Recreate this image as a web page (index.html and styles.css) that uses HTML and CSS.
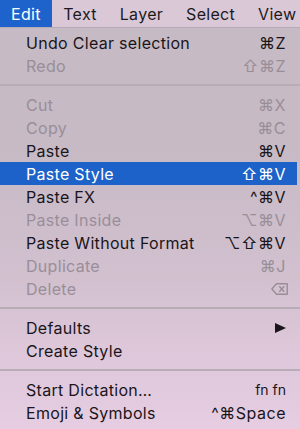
FILE: index.html
```html
<!DOCTYPE html>
<html>
<head>
<meta charset="utf-8">
<link rel="stylesheet" href="styles.css">
</head>
<body>
<div class="screen">
  <div class="menubar">
    <span class="mb-item active">Edit</span>
    <span class="mb-item">Text</span>
    <span class="mb-item">Layer</span>
    <span class="mb-item">Select</span>
    <span class="mb-item">View</span>
  </div>
  <div class="menu">
    <div class="row"><span class="label">Undo Clear selection</span><span class="key">⌘Z</span></div>
    <div class="row dis"><span class="label">Redo</span><span class="key">⇧⌘Z</span></div>
    <div class="sep"></div>
    <div class="row dis"><span class="label">Cut</span><span class="key">⌘X</span></div>
    <div class="row dis"><span class="label">Copy</span><span class="key">⌘C</span></div>
    <div class="row"><span class="label">Paste</span><span class="key">⌘V</span></div>
    <div class="row sel"><span class="label">Paste Style</span><span class="key">⇧⌘V</span></div>
    <div class="row"><span class="label">Paste FX</span><span class="key">^⌘V</span></div>
    <div class="row dis"><span class="label">Paste Inside</span><span class="key">⌥⌘V</span></div>
    <div class="row"><span class="label">Paste Without Format</span><span class="key">⌥⇧⌘V</span></div>
    <div class="row dis"><span class="label">Duplicate</span><span class="key">⌘J</span></div>
    <div class="row dis"><span class="label">Delete</span><span class="key">
      <svg class="del" width="17" height="12" viewBox="0 0 17 12"><path d="M5.5 0.75 H16.25 V11.25 H5.5 L0.9 6 Z" fill="none" stroke="currentColor" stroke-width="1.4" stroke-linejoin="round"/><path d="M8.3 3.3 L13.2 8.7 M13.2 3.3 L8.3 8.7" stroke="currentColor" stroke-width="1.5"/></svg>
    </span></div>
    <div class="sep"></div>
    <div class="row"><span class="label">Defaults</span><span class="key"><svg width="11" height="10" viewBox="0 0 11 10"><path d="M0 0 L11 5 L0 10 Z" fill="currentColor"/></svg></span></div>
    <div class="row"><span class="label">Create Style</span></div>
    <div class="sep"></div>
    <div class="row"><span class="label">Start Dictation…</span><span class="key small">fn fn</span></div>
    <div class="row"><span class="label">Emoji &amp; Symbols</span><span class="key">^⌘Space</span></div>
  </div>
</div>
</body>
</html>
```
FILE: styles.css
```css
html, body {
  margin: 0;
  padding: 0;
}
body {
  width: 300px;
  height: 429px;
  overflow: hidden;
  font-family: Inter, "Noto Sans", "DejaVu Sans", sans-serif;
}
.screen {
  width: 300px;
  height: 429px;
  background: linear-gradient(180deg, #c6bac4 0px, #c7bac5 150px, #d2c0cf 280px, #dfc8db 360px, #e6cde2 429px);
  display: flex;
  flex-direction: column;
}
.menubar {
  height: 27px;
  display: flex;
  align-items: stretch;
  background: #dac8d7;
  border-bottom: 1px solid #b6abb4;
  box-sizing: content-box;
  white-space: nowrap;
}
.mb-item {
  font-size: 16px;
  letter-spacing: 0.3px;
  color: #1d1a1d;
  display: flex;
  align-items: center;
  padding: 0 11.5px;
}
.mb-item.active {
  background: #1d63cb;
  color: #ffffff;
  padding: 0 11px;
}
.menu {
  padding-top: 3px;
  display: flex;
  flex-direction: column;
}
.row {
  height: 23px;
  display: flex;
  align-items: center;
  justify-content: space-between;
  padding: 0 14px 0 26px;
  font-size: 16px;
  letter-spacing: 0.3px;
  color: #1a151a;
  white-space: nowrap;
}
.row.dis { color: #998e98; }
.row.sel {
  background: #1c62c9;
  color: #ffffff;
  margin-right: 3px;
  padding-right: 11px;
}
.key {
  font-family: Inter, "DejaVu Sans", sans-serif;
  font-size: 16px;
  display: flex;
  align-items: center;
  letter-spacing: 0.5px;
}
.key.small { font-size: 14px; letter-spacing: 0; }
.sep {
  height: 16px;
  display: flex;
  align-items: center;
}
.sep::before {
  content: "";
  display: block;
  width: 100%;
  height: 2px;
  background: #b8acb6;
}
.del { margin-right: -2px; }
```
